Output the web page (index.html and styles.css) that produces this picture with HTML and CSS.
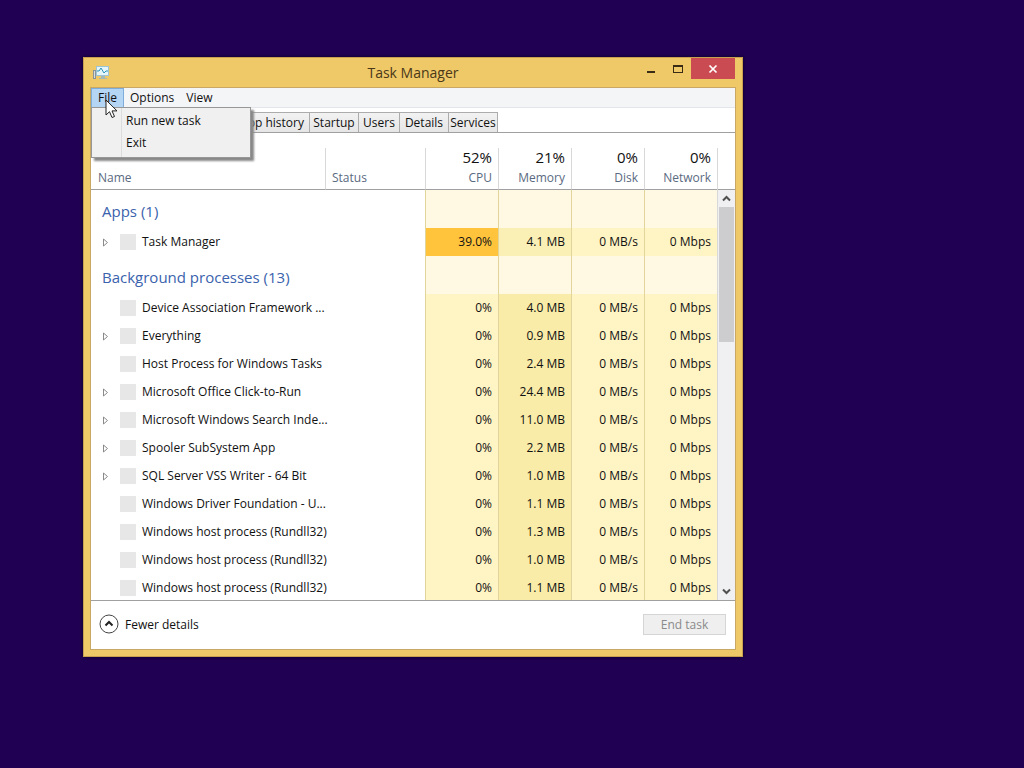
FILE: index.html
```html
<!DOCTYPE html>
<html lang="en">
<head>
  <meta charset="UTF-8">
  <title>Task Manager</title>
  <link rel="stylesheet" href="styles.css">
</head>
<body>
  <div class="window">
    <header class="title-bar">
      <svg class="app-icon" width="18" height="16" viewBox="0 0 18 16">
        <rect x="1.500" y="5.500" width="2" height="8" fill="#d8dde0" stroke="#8a9397"/>
        <rect x="4.500" y="1.500" width="12" height="9" fill="#e4f6fc" stroke="#9cc4d4"/>
        <path d="M5 6h2l2-3 3 5 2-2h2" fill="none" stroke="#2b93b8"/>
        <path d="M9 11h4v2H9zM7 13h8v1H7z" fill="#a5b8b5"/>
      </svg>
      <h1>Task Manager</h1>
      <div class="window-buttons">
        <button class="min-btn" aria-label="Minimize"><svg width="10" height="10"><path d="M1 7h8v2H1z" fill="#3a2c14"/></svg></button>
        <button class="max-btn" aria-label="Maximize"><svg width="10" height="10"><path d="M0 1h10v8H0zM1 3v5h8V3z" fill="#3a2c14" fill-rule="evenodd"/></svg></button>
        <button class="close-btn" aria-label="Close"><svg width="10" height="10"><path d="M1.500 1.500l7 7M8.500 1.500l-7 7" stroke="#fff" stroke-width="1.700"/></svg></button>
      </div>
    </header>

    <main class="client">
      <nav class="menu-bar">
        <div class="menu">
          <button class="menu-btn active">File</button>
          <div class="dropdown">
            <button>Run new task</button>
            <button>Exit</button>
          </div>
          <svg class="cursor" width="13" height="20" viewBox="0 0 13 20">
            <path d="M1 1v15l3.500-3.300 2.500 5.800 2.500-1-2.500-5.600h5z" fill="#fff" stroke="#222"/>
          </svg>
        </div>
        <button class="menu-btn">Options</button>
        <button class="menu-btn">View</button>
      </nav>

      <div class="tabs">
        <button class="tab history">App history</button>
        <button class="tab medium">Startup</button>
        <button class="tab small">Users</button>
        <button class="tab medium">Details</button>
        <button class="tab medium">Services</button>
      </div>

      <div class="list">
        <table class="processes">
          <colgroup>
            <col>
            <col class="status-col">
            <col class="usage-col">
            <col class="usage-col">
            <col class="usage-col">
            <col class="usage-col">
          </colgroup>
          <thead>
            <tr>
              <th>Name</th>
              <th>Status</th>
              <th class="usage"><span class="total">52%</span>CPU</th>
              <th class="usage"><span class="total">21%</span>Memory</th>
              <th class="usage"><span class="total">0%</span>Disk</th>
              <th class="usage"><span class="total">0%</span>Network</th>
            </tr>
          </thead>
          <tbody>
            <tr class="group"><td colspan="2">Apps (1)</td><td></td><td></td><td></td><td></td></tr>
            <tr class="light">
              <td colspan="2"><div class="name"><svg class="arrow" width="7" height="9"><path d="M1.500 1v7l4-3.500z"/></svg><i class="icon"></i><span>Task Manager</span></div></td>
              <td class="high">39.0%</td><td class="mem">4.1 MB</td><td>0 MB/s</td><td>0 Mbps</td>
            </tr>
            <tr class="group"><td colspan="2">Background processes (13)</td><td></td><td></td><td></td><td></td></tr>
            <tr>
              <td colspan="2"><div class="name"><i class="icon"></i><span>Device Association Framework ...</span></div></td>
              <td>0%</td><td class="mem">4.0 MB</td><td>0 MB/s</td><td>0 Mbps</td>
            </tr>
            <tr>
              <td colspan="2"><div class="name"><svg class="arrow" width="7" height="9"><path d="M1.500 1v7l4-3.500z"/></svg><i class="icon"></i><span>Everything</span></div></td>
              <td>0%</td><td class="mem">0.9 MB</td><td>0 MB/s</td><td>0 Mbps</td>
            </tr>
            <tr>
              <td colspan="2"><div class="name"><i class="icon"></i><span>Host Process for Windows Tasks</span></div></td>
              <td>0%</td><td class="mem">2.4 MB</td><td>0 MB/s</td><td>0 Mbps</td>
            </tr>
            <tr>
              <td colspan="2"><div class="name"><svg class="arrow" width="7" height="9"><path d="M1.500 1v7l4-3.500z"/></svg><i class="icon"></i><span>Microsoft Office Click-to-Run</span></div></td>
              <td>0%</td><td class="mem">24.4 MB</td><td>0 MB/s</td><td>0 Mbps</td>
            </tr>
            <tr>
              <td colspan="2"><div class="name"><svg class="arrow" width="7" height="9"><path d="M1.500 1v7l4-3.500z"/></svg><i class="icon"></i><span>Microsoft Windows Search Inde...</span></div></td>
              <td>0%</td><td class="mem">11.0 MB</td><td>0 MB/s</td><td>0 Mbps</td>
            </tr>
            <tr>
              <td colspan="2"><div class="name"><svg class="arrow" width="7" height="9"><path d="M1.500 1v7l4-3.500z"/></svg><i class="icon"></i><span>Spooler SubSystem App</span></div></td>
              <td>0%</td><td class="mem">2.2 MB</td><td>0 MB/s</td><td>0 Mbps</td>
            </tr>
            <tr>
              <td colspan="2"><div class="name"><svg class="arrow" width="7" height="9"><path d="M1.500 1v7l4-3.500z"/></svg><i class="icon"></i><span>SQL Server VSS Writer - 64 Bit</span></div></td>
              <td>0%</td><td class="mem">1.0 MB</td><td>0 MB/s</td><td>0 Mbps</td>
            </tr>
            <tr>
              <td colspan="2"><div class="name"><i class="icon"></i><span>Windows Driver Foundation - U...</span></div></td>
              <td>0%</td><td class="mem">1.1 MB</td><td>0 MB/s</td><td>0 Mbps</td>
            </tr>
            <tr>
              <td colspan="2"><div class="name"><i class="icon"></i><span>Windows host process (Rundll32)</span></div></td>
              <td>0%</td><td class="mem">1.3 MB</td><td>0 MB/s</td><td>0 Mbps</td>
            </tr>
            <tr>
              <td colspan="2"><div class="name"><i class="icon"></i><span>Windows host process (Rundll32)</span></div></td>
              <td>0%</td><td class="mem">1.0 MB</td><td>0 MB/s</td><td>0 Mbps</td>
            </tr>
            <tr>
              <td colspan="2"><div class="name"><i class="icon"></i><span>Windows host process (Rundll32)</span></div></td>
              <td>0%</td><td class="mem">1.1 MB</td><td>0 MB/s</td><td>0 Mbps</td>
            </tr>
          </tbody>
        </table>
        <div class="scroll-side">
          <div class="scroll-head"></div>
          <div class="scrollbar">
            <button aria-label="Scroll up"><svg width="9" height="7"><path d="M1 5.500l3.500-3.500 3.500 3.500"/></svg></button>
            <div class="track"><div class="thumb"></div></div>
            <button aria-label="Scroll down"><svg width="9" height="7"><path d="M1 1.500l3.500 3.500 3.500-3.500"/></svg></button>
          </div>
        </div>
      </div>

      <footer class="footer">
        <button class="details-btn">
          <svg width="20" height="20"><circle cx="10" cy="10" r="9" fill="#fff" stroke="#444"/><path d="M6.500 11.500l3.500-3.500 3.500 3.500" fill="none" stroke="#222" stroke-width="2"/></svg>
          Fewer details
        </button>
        <button class="end-btn" disabled>End task</button>
      </footer>
    </main>
  </div>
</body>
</html>
```

FILE: styles.css
```css
* {
  box-sizing: border-box;
}

body {
  margin: 0;
  height: 100vh;
  padding: 57px 281px 111px 83px;
  display: flex;
  background: #200052;
  font-family: "Open Sans", "Noto Sans", sans-serif;
  font-size: 12px;
  color: #111;
}

button {
  margin: 0;
  padding: 0;
  border: none;
  background: none;
  font: inherit;
  color: inherit;
  white-space: nowrap;
}

svg {
  display: block;
  flex-shrink: 0;
}

.window {
  flex: 1;
  min-width: 0;
  display: flex;
  flex-direction: column;
  padding: 0 7px 7px;
  background: #efc868;
  border: 1px solid #c9a050;
  box-shadow: 0 0 3px #0b0022;
}

/* Title bar */
.title-bar {
  display: grid;
  grid-template-columns: 1fr auto 1fr;
  height: 30px;
  align-items: center;
}

.app-icon {
  margin-left: 1px;
}

h1 {
  margin: 0;
  padding-bottom: 2px;
  font-size: 14px;
  font-weight: 400;
  color: #4a3818;
}

.window-buttons {
  display: flex;
  align-self: start;
  justify-content: flex-end;
}

.window-buttons button {
  width: 27px;
  height: 21px;
  display: flex;
  align-items: center;
  justify-content: center;
}

.window-buttons .close-btn {
  width: 44px;
  background: #cb4b52;
}

/* Client area */
.client {
  flex: 1;
  min-height: 0;
  display: flex;
  flex-direction: column;
  background: #fff;
  outline: 1px solid #c9a864;
}

.menu-bar {
  display: flex;
  height: 20px;
  background: #f4f5f7;
  border-bottom: 1px solid #e2e6ea;
}

.menu {
  position: relative;
}

.menu-btn {
  height: 20px;
  padding: 0 6px 2px;
}

.menu-btn.active {
  width: 33px;
  background: #b5d5f5;
  border: 1px solid #7eadd9;
  padding: 0 0 2px;
}

.dropdown {
  position: absolute;
  z-index: 1;
  top: 19px;
  left: 0;
  width: 160px;
  padding: 2px 2px 3px;
  background: linear-gradient(to right, #f0f0f0 29px, #dcdcdc 29px, #dcdcdc 30px, #f0f0f0 30px);
  border: 1px solid #979797;
  box-shadow: 3px 3px 2px #888;
}

.dropdown button {
  display: block;
  width: 100%;
  height: 22px;
  padding: 0 0 1px 32px;
  text-align: left;
}

.cursor {
  position: absolute;
  z-index: 2;
  top: 11px;
  left: 14px;
}

/* Tabs */
.tabs {
  display: flex;
  flex-shrink: 0;
  height: 25px;
  padding: 4px 2px 0;
  border-bottom: 1px solid #a0a0a0;
}

.tab {
  background: linear-gradient(#f2f2f2, #e6e6e6);
  border: 1px solid #acacac;
  border-bottom: none;
}

.tab + .tab {
  border-left: none;
}

/* mostly covered by the open menu */
.tab.history {
  width: 217px;
  padding-right: 5px;
  text-align: right;
}

.tab.medium {
  width: 49px;
}

.tab.small {
  width: 41px;
}

/* Process list */
.list {
  flex: 1;
  min-height: 0;
  display: flex;
  align-items: flex-start;
  padding-top: 15px;
  overflow: hidden;
  border-bottom: 1px solid #a0a0a0;
}

.processes {
  flex: 1;
  width: 0;
  table-layout: fixed;
  border-collapse: separate;
  border-spacing: 0;
}

.status-col {
  width: 100px;
}

.usage-col {
  width: 73px;
}

th {
  height: 42px;
  padding: 0 6px 2px;
  vertical-align: bottom;
  text-align: left;
  font-weight: 400;
  line-height: 18px;
  color: #5a6a80;
  border-bottom: 1px solid #a0a0a0;
}

th:first-child {
  padding-left: 7px;
}

th + th {
  border-left: 1px solid #d8d8d8;
}

th.usage {
  text-align: right;
}

.total {
  display: block;
  font-size: 15px;
  line-height: 18px;
  padding-bottom: 3px;
  color: #111;
}

td {
  height: 28px;
  padding: 0 6px 2px;
  text-align: right;
  white-space: nowrap;
  background: #fff4c4;
  border-left: 1px solid #e2d59c;
}

td:first-child {
  padding: 0;
  text-align: left;
  background: #fff;
  border-left: none;
}

.mem {
  background: #f9eca8;
}

.light .mem {
  background: #faf0b6;
}

.high {
  background: #ffc43c;
}

.group td {
  height: 38px;
  background: #fff9e4;
}

.group td:first-child {
  padding: 3px 0 0 11px;
  font-size: 15px;
  color: #3a62ad;
  background: #fff;
}

.name {
  display: grid;
  grid-template-columns: 18px 16px 1fr;
  gap: 0 6px;
  align-items: center;
  padding-left: 5px;
}

.name span {
  padding-bottom: 2px;
}

.arrow {
  grid-column: 1;
  margin-left: 6px;
  fill: #fff;
  stroke: #8a8a8a;
}

.icon {
  grid-column: 2;
  width: 16px;
  height: 16px;
  background: #e7e7e7;
}

/* Scrollbar */
.scroll-side {
  align-self: stretch;
  width: 18px;
  display: flex;
  flex-direction: column;
  border-left: 1px solid #d8d8d8;
}

.scroll-head {
  height: 42px;
  flex-shrink: 0;
  border-bottom: 1px solid #a0a0a0;
}

.scrollbar {
  flex: 1;
  min-height: 0;
  display: flex;
  flex-direction: column;
  padding: 0 1px;
  background: #f0f0f2;
}

.scrollbar button {
  height: 17px;
  flex-shrink: 0;
  display: flex;
  align-items: center;
  justify-content: center;
}

.scrollbar path {
  fill: none;
  stroke: #505050;
  stroke-width: 2;
}

.track {
  flex: 1;
}

.thumb {
  height: 36%;
  background: #cdcdcf;
}

/* Footer */
.footer {
  flex-shrink: 0;
  display: flex;
  align-items: center;
  justify-content: space-between;
  height: 48px;
  padding: 0 9px 2px 8px;
}

.details-btn {
  display: flex;
  align-items: center;
  gap: 6px;
}

.end-btn {
  width: 83px;
  height: 21px;
  background: #efefef;
  border: 1px solid #d5d5d5;
  color: #8a8a8a;
}
```
